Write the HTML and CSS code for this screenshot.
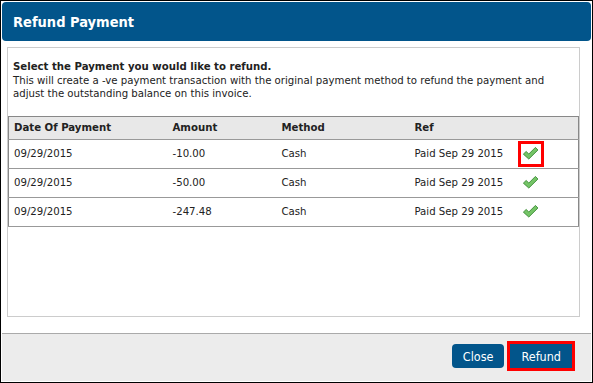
FILE: index.html
```html
<!DOCTYPE html>
<html lang="en">
<head>
  <meta charset="UTF-8">
  <title>Refund Payment</title>
  <link rel="stylesheet" href="styles.css">
</head>
<body>

  <div class="dialog">
    <div class="dialog-header">Refund Payment</div>

    <div class="dialog-body">
      <div class="panel">
        <div class="intro">
          <div class="intro-title">Select the Payment you would like to refund.</div>
          This will create a -ve payment transaction with the original payment method to refund the payment and
          adjust the outstanding balance on this invoice.
        </div>

        <table class="payments">
          <colgroup>
            <col class="c-date"><col class="c-amount"><col class="c-method"><col class="c-ref"><col>
          </colgroup>
          <thead>
            <tr><th>Date Of Payment</th><th>Amount</th><th>Method</th><th>Ref</th><th></th></tr>
          </thead>
          <tbody>
            <tr>
              <td>09/29/2015</td><td>-10.00</td><td>Cash</td><td>Paid Sep 29 2015</td>
              <td><span class="check selected"><svg viewBox="0 0 16 14" width="17" height="15"><path d="M1.3 7.6 L3.9 5.1 L6.4 7.5 L12.6 1.3 L15 3.7 L6.4 12.2 Z" fill="#74c466" stroke="#3f8f3a" stroke-width="0.9" stroke-linejoin="round"/></svg></span></td>
            </tr>
            <tr>
              <td>09/29/2015</td><td>-50.00</td><td>Cash</td><td>Paid Sep 29 2015</td>
              <td><span class="check"><svg viewBox="0 0 16 14" width="17" height="15"><path d="M1.3 7.6 L3.9 5.1 L6.4 7.5 L12.6 1.3 L15 3.7 L6.4 12.2 Z" fill="#74c466" stroke="#3f8f3a" stroke-width="0.9" stroke-linejoin="round"/></svg></span></td>
            </tr>
            <tr>
              <td>09/29/2015</td><td>-247.48</td><td>Cash</td><td>Paid Sep 29 2015</td>
              <td><span class="check"><svg viewBox="0 0 16 14" width="17" height="15"><path d="M1.3 7.6 L3.9 5.1 L6.4 7.5 L12.6 1.3 L15 3.7 L6.4 12.2 Z" fill="#74c466" stroke="#3f8f3a" stroke-width="0.9" stroke-linejoin="round"/></svg></span></td>
            </tr>
          </tbody>
        </table>
      </div>
    </div>

    <div class="dialog-footer">
      <button class="btn">Close</button>
      <button class="btn selected">Refund</button>
    </div>
  </div>

</body>
</html>
```

FILE: styles.css
```css
body {
  margin: 0;
  background: #fff;
  font-family: "DejaVu Sans Condensed", "DejaVu Sans", Verdana, sans-serif;
  font-size: 11.3px;
  color: #222;
}

.dialog {
  width: 593px;
  height: 383px;
  box-sizing: border-box;
  border: 1px solid #000;
  padding: 1px;
  display: flex;
  flex-direction: column;
  background: #fff;
}

.dialog-header {
  height: 39px;
  flex: none;
  background: #02558b;
  border-radius: 4px;
  color: #fff;
  font-weight: bold;
  font-size: 14.5px;
  padding-left: 11px;
  display: flex;
  align-items: center;
}

.dialog-body {
  flex: 1;
  padding: 6px 11px 16px 5px;
  display: flex;
}

.panel {
  flex: 1;
  border: 1px solid #ccc;
}

.intro {
  padding: 12px 5px 15px;
  line-height: 13.5px;
}

.intro-title {
  font-weight: bold;
}

.payments {
  width: 100%;
  border-collapse: collapse;
  table-layout: fixed;
  border: 1px solid #888;
}

.c-date { width: 159px; }
.c-amount { width: 109px; }
.c-method { width: 133px; }
.c-ref { width: 106px; }

.payments th {
  background: #e8e8e8;
  text-align: left;
  font-weight: bold;
  height: 22px;
  padding: 0 5px;
  border-bottom: 1px solid #999;
}

.payments td {
  height: 28px;
  padding: 0 5px;
  border-bottom: 1px solid #999;
  white-space: nowrap;
}

.check {
  display: inline-flex;
  align-items: center;
  justify-content: center;
  width: 20px;
  height: 20px;
  vertical-align: middle;
}

.check.selected {
  outline: 3px solid #f00;
}

.dialog-footer {
  height: 48px;
  flex: none;
  box-sizing: border-box;
  border-top: 1px solid #aaa;
  background: #ececec;
  display: flex;
  justify-content: flex-end;
  align-items: flex-start;
  gap: 6px;
  padding: 10px 19px 0 0;
}

.btn {
  height: 24px;
  padding: 0 11px;
  border: none;
  border-radius: 4px;
  background: #02558b;
  color: #fff;
  font-family: "DejaVu Sans Condensed", "DejaVu Sans", Verdana, sans-serif;
  font-size: 12.5px;
  cursor: pointer;
}

.btn.selected {
  outline: 3px solid #f00;
  border-radius: 0;
}
```
